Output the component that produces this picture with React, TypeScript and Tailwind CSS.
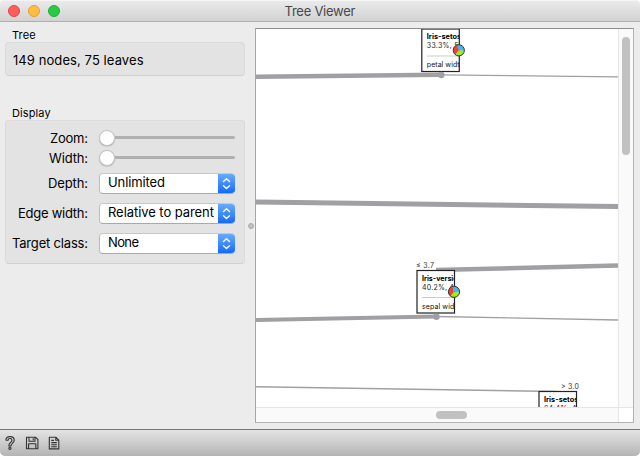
import React from "react";

const font = "font-['Inter','Liberation_Sans',sans-serif]";

function GroupTitle({ children }: { children: React.ReactNode }) {
  return <div className="h-[14px] pl-[7px] text-[11px] leading-[14px] tracking-[0.1px] whitespace-nowrap">{children}</div>;
}

function Label({ text, width }: { text: string; width: number }) {
  return (
    <div className="flex w-[82px] shrink-0 justify-end">
      <svg width={width} height="18" className="overflow-visible">
        <text x="0" y="14.2" fontSize="13" textLength={width} className="fill-black">{text}</text>
      </svg>
    </div>
  );
}

function SliderRow({ label, width }: { label: string; width: number }) {
  return (
    <div className="flex h-5 items-center gap-[11px]">
      <Label text={label} width={width} />
      <div className="-mt-px flex h-4 w-[136px] items-center">
        <div className="h-4 w-4 shrink-0 rounded-full border border-[#c4c4c4] bg-white shadow-[0_0.5px_1px_rgba(0,0,0,0.25)]" />
        <div className="h-[3px] flex-1 rounded-r-full bg-[#b0b0b0]" />
      </div>
    </div>
  );
}

function SelectRow({ label, width, value, valueWidth }: { label: string; width: number; value: string; valueWidth: number }) {
  return (
    <div className="flex h-[30px] items-center gap-[11px]">
      <Label text={label} width={width} />
      <div className="flex h-[21px] w-[136px] overflow-hidden rounded-[4px] border border-t-[#c8c8c8] border-r-0 border-b-[#a9a9a9] border-l-[#bdbdbd] bg-white">
        <svg width="118" height="19" className="shrink-0">
          <text x="8" y="13.4" fontSize="13" textLength={valueWidth} className="fill-black">{value}</text>
        </svg>
        <div className="-my-px flex h-[21px] w-[17px] items-center justify-center bg-linear-to-b from-[#6aaefb] to-[#0a66fb]">
          <svg width="9" height="13" viewBox="0 0 9 13" fill="none" stroke="white" strokeWidth="1.4" strokeLinecap="round" strokeLinejoin="round">
            <path d="M1.5 4.5 4.5 1.7 7.5 4.5M1.5 8.7 4.5 11.5 7.5 8.7" />
          </svg>
        </div>
      </div>
    </div>
  );
}

function Pie({ x, y }: { x: number; y: number }) {
  return (
    <g transform={`translate(${x} ${y})`}>
      <g transform="rotate(-22)">
        <path d="M0 0V-5.6A5.6 5.6 0 0 1 4.85 2.8Z" fill="#46b4ee" />
        <path d="M0 0 4.85 2.8A5.6 5.6 0 0 1-4.85 2.8Z" fill="#98ee22" />
        <path d="M0 0-4.85 2.8A5.6 5.6 0 0 1 0-5.6Z" fill="#ee4432" />
      </g>
      <circle r="5.6" fill="none" stroke="#333" strokeWidth="1" />
    </g>
  );
}

function TreeNode({ x, y, name, nameWidth, share, attr, attrWidth, id }: {
  x: number; y: number; name: string; nameWidth: number; share: string; attr: string; attrWidth: number; id: string;
}) {
  return (
    <g transform={`translate(${x} ${y})`}>
      <clipPath id={id}><rect width="37.5" height="43" /></clipPath>
      <rect width="37.5" height="42.5" fill="white" />
      <g clipPath={`url(#${id})`} fontSize="7">
        <text x="5" y="10" fontWeight="700" textLength={nameWidth} lengthAdjust="spacingAndGlyphs">{name}</text>
        <text x="5" y="19.4" textLength="36.5" fill="#222">{share}</text>
        <path d="M5 27H38" stroke="#ccc" strokeWidth="1" />
        <text x="5" y="38" textLength={attrWidth} fill="#111">{attr}</text>
      </g>
      <rect width="37.5" height="42.5" fill="none" stroke="#222" strokeWidth="1.2" />
      <Pie x={37} y={21.3} />
    </g>
  );
}

function TreeCanvas() {
  return (
    <svg width="362" height="378" viewBox="256 29 362 378" className="block bg-white">
      <g stroke="#a0a0a4" fill="none">
        <path d="M256 76.8 441 74.8" strokeWidth="4.5" />
        <path d="M441 74.8 618 76.8" strokeWidth="1.2" />
        <path d="M256 202 618 206.5" strokeWidth="5" />
        <path d="M436 270 618 265.6" strokeWidth="4.5" />
        <path d="M256 320 436 316.5" strokeWidth="4.2" />
        <path d="M436 316.5 618 320" strokeWidth="1.4" />
        <path d="M256 386.7 558 391.5" strokeWidth="1.4" />
      </g>
      <TreeNode id="setosa-a" x={421.8} y={29} name="Iris-setosa" nameWidth={38.6} share="33.3%, 50" attr="petal width" attrWidth={37} />
      <TreeNode id="versicolor" x={417} y={270.5} name="Iris-versicolor" nameWidth={49} share="40.2%, 40" attr="sepal width" attrWidth={39} />
      <TreeNode id="setosa-b" x={539} y={391.5} name="Iris-setosa" nameWidth={38.6} share="64.4%, 47" attr="petal width" attrWidth={37} />
      <g fill="#a0a0a4">
        <circle cx="441.3" cy="75" r="3.2" />
        <circle cx="436.5" cy="316.7" r="3.2" />
      </g>
      <g fontSize="7" fill="#333">
        <text x="416" y="268" textLength="18">≤ 3.7</text>
        <text x="561" y="388.5" textLength="18">&gt; 3.0</text>
      </g>
    </svg>
  );
}

export default function App() {
  return (
    <div className={`flex h-[456px] w-[640px] flex-col overflow-hidden rounded-[5px] bg-[#ececec] text-black ${font}`}>
      <header className="grid h-[22px] shrink-0 grid-cols-[1fr_auto_1fr] items-center border-t border-b border-t-[#f5f5f5] border-b-[#afafaf] bg-linear-to-b from-[#eaeaea] to-[#d2d2d2] px-2">
        <div className="flex gap-2">
          <span className="h-3 w-3 rounded-full border border-[#e2463f] bg-[#fc5f5a]" />
          <span className="h-3 w-3 rounded-full border border-[#dfa030] bg-[#fdbe3e]" />
          <span className="h-3 w-3 rounded-full border border-[#1fae36] bg-[#28cb42]" />
        </div>
        <svg width="72" height="20" className="overflow-visible">
          <text x="0.5" y="15.3" fontSize="13" textLength="71" className="fill-[#484848]">Tree Viewer</text>
        </svg>
      </header>

      <main className="flex h-[407px] shrink-0 pl-[5px]">
        <aside className="w-[240px] shrink-0 pt-[6px]">
          <GroupTitle>Tree</GroupTitle>
          <div className="flex h-[34px] items-center rounded-[4px] border border-[#dadada] border-b-[#d0d0d0] bg-[#e3e3e3] pl-[7px]">
            <svg width="132" height="18" className="overflow-visible">
              <text x="0" y="15" fontSize="13" textLength="130.5">149 nodes, 75 leaves</text>
            </svg>
          </div>
          <div className="mt-[30px]">
            <GroupTitle>Display</GroupTitle>
          </div>
          <div className="h-[144px] rounded-[4px] border border-[#dadada] border-b-[#d0d0d0] bg-[#e3e3e3] pt-[7px]">
            <SliderRow label="Zoom:" width={38} />
            <SliderRow label="Width:" width={39} />
            <SelectRow label="Depth:" width={40} value="Unlimited" valueWidth={57} />
            <SelectRow label="Edge width:" width={70} value="Relative to parent" valueWidth={106} />
            <SelectRow label="Target class:" width={76} value="None" valueWidth={31} />
          </div>
        </aside>
        <div className="flex w-[10px] items-center justify-end">
          <span className="mr-px h-[6px] w-[6px] rounded-full border border-[#adadad] bg-[#c0c0c0]" />
        </div>
        <section className="mt-[6px] grid h-[395px] w-[379px] grid-cols-[362px_15px] grid-rows-[378px_15px] border border-t-[#8e8e8e] border-r-[#b4b4b4] border-b-[#b4b4b4] border-l-[#a6a6a6] bg-white">
          <TreeCanvas />
          <div className="flex justify-center border-l border-[#e6e6e6] bg-[#fafafa] pt-2">
            <span className="h-[118px] w-2 rounded-full bg-[#c1c1c1]" />
          </div>
          <div className="flex items-center border-t border-[#e6e6e6] bg-[#fafafa] pl-[180px]">
            <span className="h-2 w-[31px] rounded-full bg-[#c1c1c1]" />
          </div>
          <div className="border-t border-l border-[#e6e6e6] bg-white" />
        </section>
      </main>

      <footer className="flex h-[27px] items-center border-t border-[#737373] bg-linear-to-b from-[#e4e4e4] to-[#b4b4b4] pl-1">
        <svg width="60" height="26" viewBox="4 430 60 26" fill="none" stroke="#333" strokeWidth="1.1" strokeLinejoin="round">
          <path d="M6 440.2C5.6 437.8 7.5 436.6 10 436.6S14.2 438 14.2 440.2C14.2 443 11 443.3 11 446H8.8C8.8 442.4 12 442.6 12 440.2C12 438 8 438 8 440.2Z" />
          <circle cx="9.9" cy="448.3" r="1.1" />
          <path d="M26.5 437.3H35.7L37.9 439.5V448.7H26.5ZM29 437.5V441.3H35V437.5M33.2 438.3V440.3M28.6 448.5V443.8H35.8V448.5" />
          <path d="M49.3 437.3H56L58.8 440.1V448.9H49.3ZM55.8 437.5V440.3H58.6M51.3 440.4H54M51.3 442.6H56.8M51.3 444.7H56.8M51.3 446.8H56.8" />
        </svg>
      </footer>
    </div>
  );
}
